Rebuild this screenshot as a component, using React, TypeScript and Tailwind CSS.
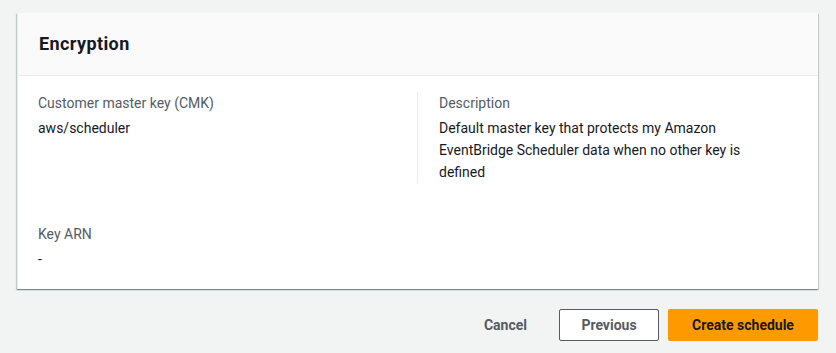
import React from "react";

const font = { fontFamily: "Roboto, 'Liberation Sans', sans-serif" };

function Field({ label, value }: { label: string; value: React.ReactNode }) {
	return (
		<div>
			<div className="text-[14px] leading-[22px] text-[#545b64]">{label}</div>
			<div className="text-[14px] leading-[22px] text-[#16191f] mt-[3px]">{value}</div>
		</div>
	);
}

export default function App() {
	return (
		<div className="min-h-[353px] w-[836px] bg-[#f2f3f3]" style={font}>
			<div className="pt-[13px] pl-[17px] pr-[18px]">
				<div className="bg-white border-l border-[#eaeded] shadow-[0_1px_1px_0_rgba(0,28,36,0.3),1px_1px_1px_0_rgba(0,28,36,0.15),-1px_1px_1px_0_rgba(0,28,36,0.15)]">
					<div className="bg-[#fafafa] border-b border-[#eaeded] h-[63px] flex items-center px-[21px]">
						<h2 className="text-[18px] font-bold text-[#16191f] leading-[22px] tracking-[0.4px]">Encryption</h2>
					</div>
					<div className="px-[20px] pt-[16px] pb-[19px]">
						<div className="grid grid-cols-2">
							<div className="pr-[20px] border-r border-[#eaeded] min-h-[90px]">
								<Field label="Customer master key (CMK)" value="aws/scheduler" />
							</div>
							<div className="pl-[21px]">
								<Field
									label="Description"
									value={
										<span className="block max-w-[320px]">
											Default master key that protects my Amazon EventBridge Scheduler data when no other key is defined
										</span>
									}
								/>
							</div>
						</div>
						<div className="mt-[40px]">
							<Field label="Key ARN" value="-" />
						</div>
					</div>
				</div>
				<div className="flex justify-end items-center gap-[10px] mt-[20px]">
					<button className="h-[32px] px-[20px] text-[14px] font-bold text-[#545b64]">Cancel</button>
					<button className="h-[32px] w-[100px] rounded-[2px] border border-[#545b64] bg-white text-[14px] font-bold text-[#545b64] ml-[2px]">
						Previous
					</button>
					<button className="h-[32px] w-[150px] rounded-[2px] bg-[#ff9900] text-[14px] font-bold text-[#16191f] -ml-[1px]">
						Create schedule
					</button>
				</div>
			</div>
		</div>
	);
}
